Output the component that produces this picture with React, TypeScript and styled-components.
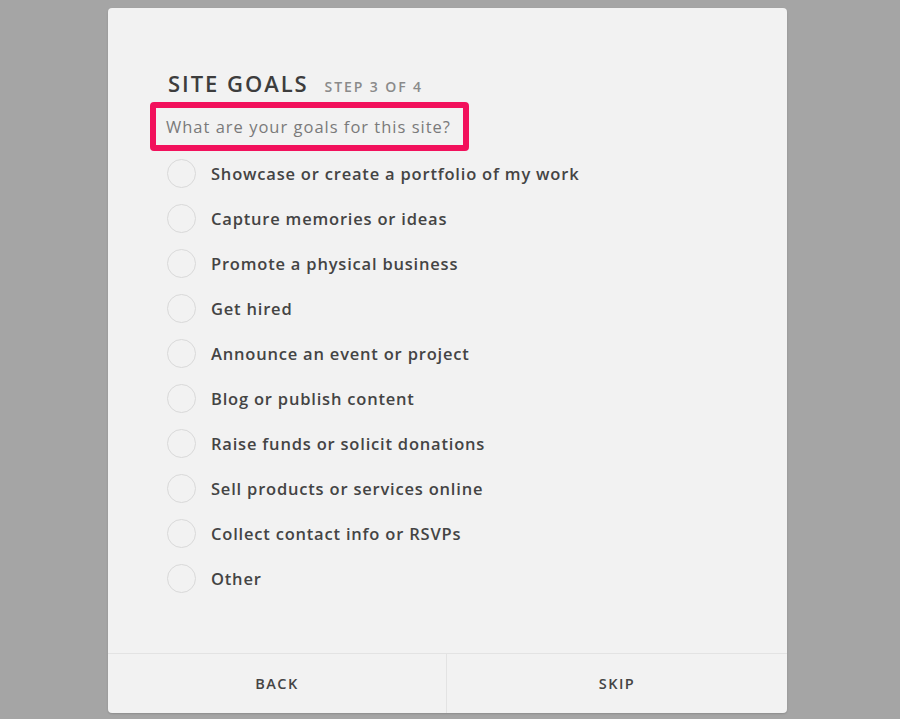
import styled, { createGlobalStyle } from "styled-components";

const goals = [
  "Showcase or create a portfolio of my work",
  "Capture memories or ideas",
  "Promote a physical business",
  "Get hired",
  "Announce an event or project",
  "Blog or publish content",
  "Raise funds or solicit donations",
  "Sell products or services online",
  "Collect contact info or RSVPs",
  "Other",
];

const GlobalStyle = createGlobalStyle`
  html, body {
    margin: 0;
    padding: 0;
    background: #a5a5a5;
  }
  body {
    font-family: "Open Sans", "Liberation Sans", sans-serif;
  }
`;

export default function App() {
  return (
    <>
      <GlobalStyle />
      <Page>
        <Card>
          <Content>
            <Header>
              <Title>SITE GOALS</Title>
              <Step>STEP 3 OF 4</Step>
            </Header>
            <Question>What are your goals for this site?</Question>
            <List>
              {goals.map((g) => (
                <Option key={g}>
                  <Radio />
                  <Label>{g}</Label>
                </Option>
              ))}
            </List>
          </Content>
          <Footer>
            <FooterButton>BACK</FooterButton>
            <FooterButton>SKIP</FooterButton>
          </Footer>
        </Card>
      </Page>
    </>
  );
}

const Page = styled.div`
  width: 900px;
  height: 719px;
  padding: 8px 0 0 108px;
  box-sizing: border-box;
`;

const Card = styled.div`
  width: 679px;
  height: 705px;
  background: #f2f2f2;
  border-radius: 4px;
  box-shadow: 0 1px 2px rgba(0, 0, 0, 0.15);
  display: flex;
  flex-direction: column;
  overflow: hidden;
`;

const Content = styled.div`
  flex: 1;
  padding: 60px 0 0 42px;
`;

const Header = styled.div`
  display: flex;
  align-items: baseline;
  gap: 16px;
  padding-left: 18px;
  height: 34px;
`;

const Title = styled.div`
  font-size: 22px;
  font-weight: 600;
  color: #3d3d3d;
  letter-spacing: 1.95px;
`;

const Step = styled.div`
  font-size: 14px;
  font-weight: 600;
  color: #8a8a8a;
  letter-spacing: 1.9px;
`;

const Question = styled.div`
  display: inline-block;
  border: 6px solid #f2115c;
  border-radius: 4px;
  padding: 0 12px 0 10px;
  height: 37px;
  line-height: 37px;
  font-size: 16.5px;
  color: #7a7a7a;
  letter-spacing: 1px;
`;

const List = styled.div`
  display: flex;
  flex-direction: column;
  padding-left: 17px;
`;

const Option = styled.div`
  display: flex;
  align-items: center;
  height: 45px;
  gap: 15px;
`;

const Radio = styled.div`
  width: 27px;
  height: 27px;
  border-radius: 50%;
  border: 1.5px solid #d9d9d9;
  flex-shrink: 0;
`;

const Label = styled.div`
  font-size: 16.5px;
  font-weight: 600;
  color: #444;
  letter-spacing: 0.8px;
  margin-top: -1px;
`;

const Footer = styled.div`
  display: grid;
  grid-template-columns: 338px 1fr;
  height: 59px;
  border-top: 1px solid #e3e3e3;
`;

const FooterButton = styled.div`
  display: flex;
  align-items: center;
  justify-content: center;
  font-size: 14.5px;
  font-weight: 600;
  color: #444;
  letter-spacing: 1.5px;
  & + & {
    border-left: 1px solid #e3e3e3;
  }
`;
